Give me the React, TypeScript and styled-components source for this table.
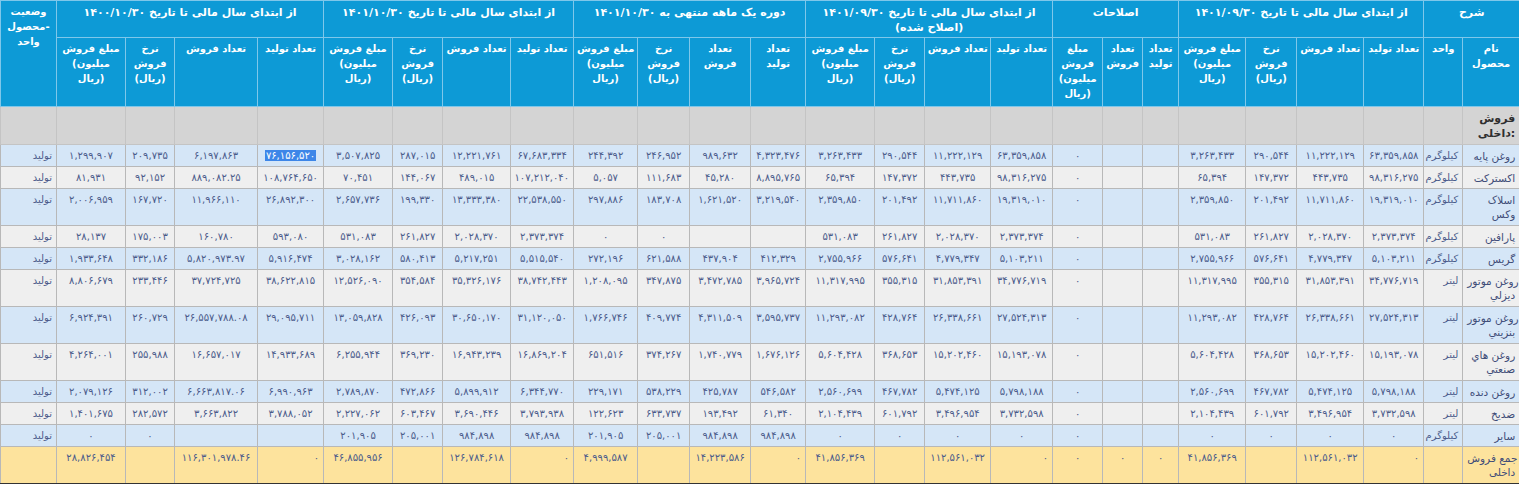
import React from 'react';
import styled, { createGlobalStyle } from 'styled-components';

const GlobalStyle = createGlobalStyle`
  html, body {
    margin: 0;
    padding: 0;
    background: #ffffff;
  }
  body {
    font-family: "DejaVu Sans", "Noto Sans", sans-serif;
  }
`;

type Tone = 'blue' | 'gray' | 'section' | 'total';

const TONES: Record<Tone, string> = {
  blue: '#d5e6f7',
  gray: '#efefef',
  section: '#d4d4d4',
  total: '#fde39d',
};

const Table = styled.table`
  width: 1519px;
  table-layout: fixed;
  border-collapse: collapse;
  direction: rtl;
  border-top: 1px solid #8ccde9;
  border-bottom: 2px solid #333333;
`;

const HeadRow = styled.tr<{ $h: number }>`
  height: ${(p) => p.$h}px;
`;

const HeadCell = styled.th<{ $big?: boolean }>`
  background: #0d9ad6;
  color: #ffffff;
  font-weight: bold;
  font-size: ${(p) => (p.$big ? 11 : 10)}px;
  line-height: 15px;
  text-align: center;
  vertical-align: top;
  padding: ${(p) => (p.$big ? '4px 2px 2px' : '3px 2px')};
  border: 1px solid #7fc7ea;
  white-space: nowrap;
  overflow: hidden;
`;

// header captions in the source are laid out left-to-right, so the
// brackets of "(میلیون" / "ریال)" sit on the outer sides
const Line = styled.div.attrs({ dir: 'ltr' })`
  display: block;
`;

const Row = styled.tr<{ $tone: Tone; $h: number }>`
  height: ${(p) => p.$h}px;
  background: ${(p) => TONES[p.$tone]};
`;

const Cell = styled.td<{ $align?: 'right' | 'center' }>`
  font-size: 10px;
  line-height: 14px;
  color: #4b5b8b;
  text-align: ${(p) => p.$align ?? 'center'};
  vertical-align: top;
  padding: 4px 4px 3px;
  border: 1px solid #b8b8b8;
  white-space: nowrap;
  overflow: hidden;
`;

const NameCell = styled(Cell)`
  text-align: right;
  font-size: 10.5px;
  color: #3f4d78;
`;

const SectionCell = styled(Cell)`
  text-align: right;
  font-weight: bold;
  font-size: 11px;
  line-height: 15px;
  color: #2f2f2f;
  border-color: #c4c4c4;
`;

const Selected = styled.span`
  background: #3d86e8;
  color: #ffffff;
  padding: 0 1px;
`;

const WIDTHS = [
  57, 39, 60, 67, 51, 67, 36, 40, 50, 62, 66, 50, 69, 55, 61, 52, 64, 63, 68, 50, 69, 66, 83, 49,
  69, 56,
];

const STD_HEAD = [['تعداد تولید'], ['تعداد فروش'], ['نرخ', 'فروش', '(ریال)'], ['مبلغ فروش', '(میلیون', 'ریال)']];
const ADJ_HEAD = [['تعداد', 'تولید'], ['تعداد', 'فروش'], ['مبلغ', 'فروش', '(میلیون', 'ریال)']];
const MONTH_HEAD = [['تعداد', 'تولید'], ['تعداد', 'فروش'], ['نرخ', 'فروش', '(ریال)'], ['مبلغ فروش', '(میلیون', 'ریال)']];

const SUB_HEADS = [
  [['نام', 'محصول'], ['واحد']],
  STD_HEAD,
  ADJ_HEAD,
  STD_HEAD,
  MONTH_HEAD,
  STD_HEAD,
  STD_HEAD,
].flat();

const GROUPS: { span: number; lines: string[] }[] = [
  { span: 2, lines: ['شرح'] },
  { span: 4, lines: ['از ابتدای سال مالی تا تاریخ ۱۴۰۱/۰۹/۳۰'] },
  { span: 3, lines: ['اصلاحات'] },
  { span: 4, lines: ['از ابتدای سال مالی تا تاریخ ۱۴۰۱/۰۹/۳۰', '(اصلاح شده)'] },
  { span: 4, lines: ['دوره یک ماهه منتهی به ۱۴۰۱/۱۰/۳۰'] },
  { span: 4, lines: ['از ابتدای سال مالی تا تاریخ ۱۴۰۱/۱۰/۳۰'] },
  { span: 4, lines: ['از ابتدای سال مالی تا تاریخ ۱۴۰۰/۱۰/۳۰'] },
];

type Product = {
  name: string[];
  unit: string;
  g1: string[];
  g4: string[];
  g5: string[];
  g6: string[];
};

const PRODUCTS: Product[] = [
  {
    name: ['روغن پایه'],
    unit: 'کیلوگرم',
    g1: ['۶۳,۳۵۹,۸۵۸', '۱۱,۲۲۲,۱۲۹', '۲۹۰,۵۴۴', '۳,۲۶۳,۴۳۳'],
    g4: ['۴,۳۲۳,۴۷۶', '۹۸۹,۶۳۲', '۲۴۶,۹۵۲', '۲۴۴,۳۹۲'],
    g5: ['۶۷,۶۸۳,۳۳۴', '۱۲,۲۲۱,۷۶۱', '۲۸۷,۰۱۵', '۳,۵۰۷,۸۲۵'],
    g6: ['۷۶,۱۵۶,۵۲۰', '۶,۱۹۷,۸۶۳', '۲۰۹,۷۳۵', '۱,۲۹۹,۹۰۷'],
  },
  {
    name: ['اکسترکت'],
    unit: 'کیلوگرم',
    g1: ['۹۸,۳۱۶,۲۷۵', '۴۴۳,۷۳۵', '۱۴۷,۳۷۲', '۶۵,۳۹۴'],
    g4: ['۸,۸۹۵,۷۶۵', '۴۵,۲۸۰', '۱۱۱,۶۸۳', '۵,۰۵۷'],
    g5: ['۱۰۷,۲۱۲,۰۴۰', '۴۸۹,۰۱۵', '۱۴۴,۰۶۷', '۷۰,۴۵۱'],
    g6: ['۱۰۸,۷۶۴,۶۵۰', '۸۸۹,۰۸۲.۲۵', '۹۲,۱۵۲', '۸۱,۹۳۱'],
  },
  {
    name: ['اسلاک', 'وکس'],
    unit: 'کیلوگرم',
    g1: ['۱۹,۳۱۹,۰۱۰', '۱۱,۷۱۱,۸۶۰', '۲۰۱,۴۹۲', '۲,۳۵۹,۸۵۰'],
    g4: ['۳,۲۱۹,۵۴۰', '۱,۶۲۱,۵۲۰', '۱۸۳,۷۰۸', '۲۹۷,۸۸۶'],
    g5: ['۲۲,۵۳۸,۵۵۰', '۱۳,۳۳۳,۳۸۰', '۱۹۹,۳۳۰', '۲,۶۵۷,۷۳۶'],
    g6: ['۲۶,۸۹۲,۳۰۰', '۱۱,۹۶۶,۱۱۰', '۱۶۷,۷۲۰', '۲,۰۰۶,۹۵۹'],
  },
  {
    name: ['پارافین'],
    unit: 'کیلوگرم',
    g1: ['۲,۳۷۳,۳۷۴', '۲,۰۲۸,۳۷۰', '۲۶۱,۸۲۷', '۵۳۱,۰۸۳'],
    g4: ['', '', '۰', '۰'],
    g5: ['۲,۳۷۳,۳۷۴', '۲,۰۲۸,۳۷۰', '۲۶۱,۸۲۷', '۵۳۱,۰۸۳'],
    g6: ['۵۹۳,۰۸۰', '۱۶۰,۷۸۰', '۱۷۵,۰۰۳', '۲۸,۱۳۷'],
  },
  {
    name: ['گریس'],
    unit: 'کیلوگرم',
    g1: ['۵,۱۰۳,۲۱۱', '۴,۷۷۹,۳۴۷', '۵۷۶,۶۴۱', '۲,۷۵۵,۹۶۶'],
    g4: ['۴۱۲,۳۲۹', '۴۳۷,۹۰۴', '۶۲۱,۵۸۸', '۲۷۲,۱۹۶'],
    g5: ['۵,۵۱۵,۵۴۰', '۵,۲۱۷,۲۵۱', '۵۸۰,۴۱۳', '۳,۰۲۸,۱۶۲'],
    g6: ['۵,۹۱۶,۴۷۴', '۵,۸۲۰,۹۷۳.۹۷', '۳۳۲,۱۸۶', '۱,۹۳۳,۶۴۸'],
  },
  {
    name: ['روغن موتور', 'ديزلي'],
    unit: 'لیتر',
    g1: ['۳۴,۷۷۶,۷۱۹', '۳۱,۸۵۳,۳۹۱', '۳۵۵,۳۱۵', '۱۱,۳۱۷,۹۹۵'],
    g4: ['۳,۹۶۵,۷۲۴', '۳,۴۷۲,۷۸۵', '۳۴۷,۸۷۵', '۱,۲۰۸,۰۹۵'],
    g5: ['۳۸,۷۴۲,۴۴۳', '۳۵,۳۲۶,۱۷۶', '۳۵۴,۵۸۴', '۱۲,۵۲۶,۰۹۰'],
    g6: ['۳۸,۶۲۲,۸۱۵', '۳۷,۷۲۴,۷۲۵', '۲۳۳,۴۴۶', '۸,۸۰۶,۶۷۹'],
  },
  {
    name: ['روغن موتور', 'بنزيني'],
    unit: 'لیتر',
    g1: ['۲۷,۵۲۴,۳۱۳', '۲۶,۳۳۸,۶۶۱', '۴۲۸,۷۶۴', '۱۱,۲۹۳,۰۸۲'],
    g4: ['۳,۵۹۵,۷۳۷', '۴,۳۱۱,۵۰۹', '۴۰۹,۷۷۴', '۱,۷۶۶,۷۴۶'],
    g5: ['۳۱,۱۲۰,۰۵۰', '۳۰,۶۵۰,۱۷۰', '۴۲۶,۰۹۳', '۱۳,۰۵۹,۸۲۸'],
    g6: ['۲۹,۰۹۵,۷۱۱', '۲۶,۵۵۷,۷۸۸.۰۸', '۲۶۰,۷۲۹', '۶,۹۲۴,۳۹۱'],
  },
  {
    name: ['روغن هاي', 'صنعتي'],
    unit: 'لیتر',
    g1: ['۱۵,۱۹۳,۰۷۸', '۱۵,۲۰۲,۴۶۰', '۳۶۸,۶۵۳', '۵,۶۰۴,۴۲۸'],
    g4: ['۱,۶۷۶,۱۲۶', '۱,۷۴۰,۷۷۹', '۳۷۴,۲۶۷', '۶۵۱,۵۱۶'],
    g5: ['۱۶,۸۶۹,۲۰۴', '۱۶,۹۴۳,۲۳۹', '۳۶۹,۲۳۰', '۶,۲۵۵,۹۴۴'],
    g6: ['۱۴,۹۳۳,۶۸۹', '۱۶,۶۵۷,۰۱۷', '۲۵۵,۹۸۸', '۴,۲۶۴,۰۰۱'],
  },
  {
    name: ['روغن دنده'],
    unit: 'لیتر',
    g1: ['۵,۷۹۸,۱۸۸', '۵,۴۷۴,۱۲۵', '۴۶۷,۷۸۲', '۲,۵۶۰,۶۹۹'],
    g4: ['۵۴۶,۵۸۲', '۴۲۵,۷۸۷', '۵۳۸,۲۲۹', '۲۲۹,۱۷۱'],
    g5: ['۶,۳۴۴,۷۷۰', '۵,۸۹۹,۹۱۲', '۴۷۲,۸۶۶', '۲,۷۸۹,۸۷۰'],
    g6: ['۶,۹۹۰,۹۶۳', '۶,۶۶۳,۸۱۷.۰۶', '۳۱۲,۰۰۲', '۲,۰۷۹,۱۲۶'],
  },
  {
    name: ['ضدیخ'],
    unit: 'لیتر',
    g1: ['۳,۷۳۲,۵۹۸', '۳,۴۹۶,۹۵۴', '۶۰۱,۷۹۲', '۲,۱۰۴,۴۳۹'],
    g4: ['۶۱,۳۴۰', '۱۹۳,۴۹۲', '۶۳۳,۷۳۷', '۱۲۲,۶۲۳'],
    g5: ['۳,۷۹۳,۹۳۸', '۳,۶۹۰,۴۴۶', '۶۰۳,۴۶۷', '۲,۲۲۷,۰۶۲'],
    g6: ['۳,۷۸۸,۰۵۲', '۳,۶۶۳,۸۲۲', '۲۸۲,۵۷۲', '۱,۴۰۱,۶۷۵'],
  },
  {
    name: ['سایر'],
    unit: 'کیلوگرم',
    g1: ['۰', '۰', '۰', '۰'],
    g4: ['۹۸۴,۸۹۸', '۹۸۴,۸۹۸', '۲۰۵,۰۰۱', '۲۰۱,۹۰۵'],
    g5: ['۹۸۴,۸۹۸', '۹۸۴,۸۹۸', '۲۰۵,۰۰۱', '۲۰۱,۹۰۵'],
    g6: ['', '', '۰', '۰'],
  },
];

const TOTAL_GROUPS = [
  ['۰', '۱۱۲,۵۶۱,۰۳۲', '', '۴۱,۸۵۶,۳۶۹'],
  ['۰', '۱۱۲,۵۶۱,۰۳۲', '', '۴۱,۸۵۶,۳۶۹'],
  ['۰', '۱۴,۲۲۳,۵۸۶', '', '۴,۹۹۹,۵۸۷'],
  ['۰', '۱۲۶,۷۸۴,۶۱۸', '', '۴۶,۸۵۵,۹۵۶'],
  ['۰', '۱۱۶,۳۰۱,۹۷۸.۴۶', '', '۲۸,۸۲۶,۴۵۴'],
];

const Lines = ({ lines }: { lines: string[] }) => (
  <>
    {lines.map((l, i) => (
      <Line key={i}>{l}</Line>
    ))}
  </>
);

const GroupCells = ({ values }: { values: string[] }) => (
  <>
    {values.map((v, i) => (
      <Cell key={i}>{v}</Cell>
    ))}
  </>
);

const ProductRow = ({ p, index }: { p: Product; index: number }) => {
  const tall = p.name.length > 1;
  return (
    <Row $tone={index % 2 === 0 ? 'blue' : 'gray'} $h={tall ? 37 : 22}>
      <NameCell>
        <Lines lines={p.name} />
      </NameCell>
      <Cell $align="right">{p.unit}</Cell>
      <GroupCells values={p.g1} />
      <Cell />
      <Cell />
      <Cell>۰</Cell>
      <GroupCells values={p.g1} />
      <GroupCells values={p.g4} />
      <GroupCells values={p.g5} />
      {index === 0 ? (
        <>
          <Cell>
            <Selected>{p.g6[0]}</Selected>
          </Cell>
          <GroupCells values={p.g6.slice(1)} />
        </>
      ) : (
        <GroupCells values={p.g6} />
      )}
      <Cell $align="right">تولید</Cell>
    </Row>
  );
};

const TotalGroup = ({ values }: { values: string[] }) => (
  <>
    <Cell $align="right">{values[0]}</Cell>
    {values.slice(1).map((v, i) => (
      <Cell key={i}>{v}</Cell>
    ))}
  </>
);

const App = () => (
  <>
    <GlobalStyle />
    <Table>
      <colgroup>
        {WIDTHS.map((w, i) => (
          <col key={i} style={{ width: w }} />
        ))}
      </colgroup>
      <thead>
        <HeadRow $h={37}>
          {GROUPS.map((g, i) => (
            <HeadCell key={i} colSpan={g.span} $big>
              <Lines lines={g.lines} />
            </HeadCell>
          ))}
          <HeadCell rowSpan={2}>
            <Lines lines={['وضعیت', 'محصول-', 'واحد']} />
          </HeadCell>
        </HeadRow>
        <HeadRow $h={69}>
          {SUB_HEADS.map((lines, i) => (
            <HeadCell key={i}>
              <Lines lines={lines} />
            </HeadCell>
          ))}
        </HeadRow>
      </thead>
      <tbody>
        <Row $tone="section" $h={37}>
          <SectionCell>
            <Lines lines={['فروش', 'داخلی:']} />
          </SectionCell>
          {WIDTHS.slice(1).map((_, i) => (
            <SectionCell key={i} />
          ))}
        </Row>
        {PRODUCTS.map((p, i) => (
          <ProductRow key={p.name.join(' ')} p={p} index={i} />
        ))}
        <Row $tone="total" $h={37}>
          <NameCell>
            <Lines lines={['جمع فروش', 'داخلی']} />
          </NameCell>
          <Cell />
          <TotalGroup values={TOTAL_GROUPS[0]} />
          <Cell>۰</Cell>
          <Cell>۰</Cell>
          <Cell>۰</Cell>
          <TotalGroup values={TOTAL_GROUPS[1]} />
          <TotalGroup values={TOTAL_GROUPS[2]} />
          <TotalGroup values={TOTAL_GROUPS[3]} />
          <TotalGroup values={TOTAL_GROUPS[4]} />
          <Cell />
        </Row>
      </tbody>
    </Table>
  </>
);

export default App;
